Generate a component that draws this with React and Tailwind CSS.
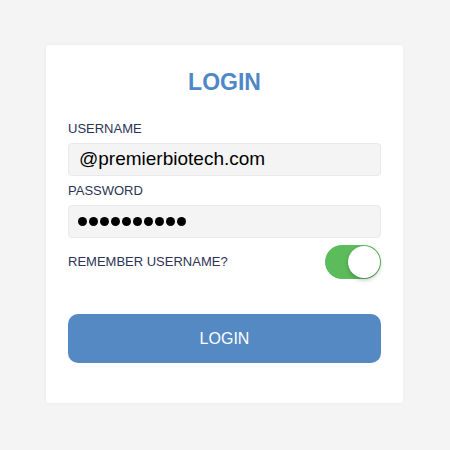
import { useState } from "react";

export default function App() {
  const [remember, setRemember] = useState(true);

  return (
    <div
      className="min-h-[450px] w-[450px] bg-[#f4f4f4] pt-[45px] pl-[46px]"
      style={{ fontFamily: '"Liberation Sans", Arial, sans-serif' }}
    >
      <div className="w-[357px] rounded-[4px] bg-white px-[22px] pt-[21px] pb-[40px] shadow-[0_0_4px_rgba(0,0,0,0.04)]">
        <h1 className="text-center text-[23px] leading-[32px] font-semibold text-[#5087c7]">LOGIN</h1>

        <label className="mt-[23px] block text-[13px] leading-[16px] text-[#2d3354]">USERNAME</label>
        <div className="mt-[6px] flex h-[33px] items-center rounded-[4px] border border-[#e9e9e9] bg-[#f4f4f4] px-[10px] text-[19px] text-black">
          @premierbiotech.com
        </div>

        <label className="mt-[7px] block text-[13px] leading-[16px] text-[#2d3354]">PASSWORD</label>
        <div className="mt-[6px] flex h-[33px] items-center gap-[2px] rounded-[4px] border border-[#e9e9e9] bg-[#f4f4f4] px-[9px]">
          {Array.from({ length: 10 }).map((_, i) => (
            <span key={i} className="h-[9px] w-[9px] rounded-full bg-black" />
          ))}
        </div>

        <div className="mt-[7px] flex items-center justify-between">
          <span className="text-[13px] leading-[16px] text-[#2d3354]">REMEMBER USERNAME?</span>
          <button
            onClick={() => setRemember(!remember)}
            className={`flex h-[34px] w-[56px] items-center rounded-full p-[1px] ${remember ? "justify-end bg-[#5cbc5c]" : "justify-start bg-[#e5e5e5]"}`}
          >
            <span className="h-[32px] w-[32px] rounded-full bg-white shadow-[0_2px_4px_rgba(0,0,0,0.25)]" />
          </button>
        </div>

        <button className="mt-[35px] flex h-[49px] w-full items-center justify-center rounded-[10px] bg-[#5589c4] text-[16px] text-white">
          LOGIN
        </button>
      </div>
    </div>
  );
}
